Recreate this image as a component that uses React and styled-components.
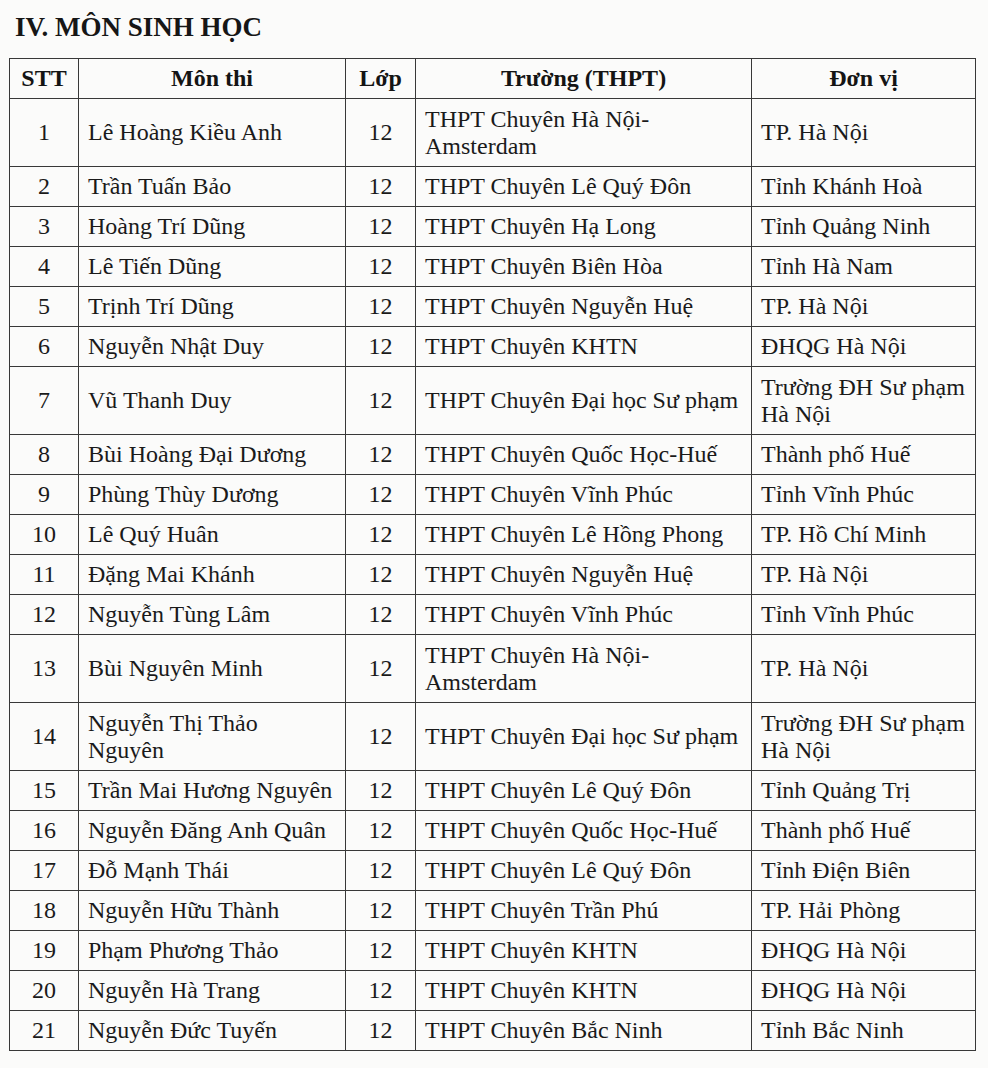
import React from 'react'
import styled, {createGlobalStyle} from "styled-components"

const GlobalStyle = createGlobalStyle`
  body {
    margin: 0;
    background: #fbfbfa;
    color: #1a1a1a;
    font-family: "Liberation Serif", "Times New Roman", serif;
  }
`

const Page = styled.div`
  padding: 12px 0 0 9px;
  width: 970px;
`

const Heading = styled.h2`
  margin: 0 0 16px 6px;
  font-size: 27px;
  line-height: 30px;
  font-weight: bold;
  color: #161616;
`

const Table = styled.table`
  border-collapse: collapse;
  table-layout: fixed;
  width: 966px;
  font-size: 24px;
  line-height: 27px;
`

const Row = styled.tr`
  height: ${props => props.tall ? "68px" : "40px"};
`

const HeadCell = styled.th`
  border: 1px solid #383838;
  font-size: 24px;
  font-weight: bold;
  text-align: center;
  padding: 0 8px;
  color: #141414;
`

const Cell = styled.td`
  border: 1px solid #383838;
  padding: 0 9px;
  vertical-align: middle;
  text-align: ${props => props.center ? "center" : "left"};
`

const students = [
    ["Lê Hoàng Kiều Anh", ["THPT Chuyên Hà Nội-", "Amsterdam"], "TP. Hà Nội"],
    ["Trần Tuấn Bảo", "THPT Chuyên Lê Quý Đôn", "Tỉnh Khánh Hoà"],
    ["Hoàng Trí Dũng", "THPT Chuyên Hạ Long", "Tỉnh Quảng Ninh"],
    ["Lê Tiến Dũng", "THPT Chuyên Biên Hòa", "Tỉnh Hà Nam"],
    ["Trịnh Trí Dũng", "THPT Chuyên Nguyễn Huệ", "TP. Hà Nội"],
    ["Nguyễn Nhật Duy", "THPT Chuyên KHTN", "ĐHQG Hà Nội"],
    ["Vũ Thanh Duy", "THPT Chuyên Đại học Sư phạm", ["Trường ĐH Sư phạm", "Hà Nội"]],
    ["Bùi Hoàng Đại Dương", "THPT Chuyên Quốc Học-Huế", "Thành phố Huế"],
    ["Phùng Thùy Dương", "THPT Chuyên Vĩnh Phúc", "Tỉnh Vĩnh Phúc"],
    ["Lê Quý Huân", "THPT Chuyên Lê Hồng Phong", "TP. Hồ Chí Minh"],
    ["Đặng Mai Khánh", "THPT Chuyên Nguyễn Huệ", "TP. Hà Nội"],
    ["Nguyễn Tùng Lâm", "THPT Chuyên Vĩnh Phúc", "Tỉnh Vĩnh Phúc"],
    ["Bùi Nguyên Minh", ["THPT Chuyên Hà Nội-", "Amsterdam"], "TP. Hà Nội"],
    [["Nguyễn Thị Thảo", "Nguyên"], "THPT Chuyên Đại học Sư phạm", ["Trường ĐH Sư phạm", "Hà Nội"]],
    ["Trần Mai Hương Nguyên", "THPT Chuyên Lê Quý Đôn", "Tỉnh Quảng Trị"],
    ["Nguyễn Đăng Anh Quân", "THPT Chuyên Quốc Học-Huế", "Thành phố Huế"],
    ["Đỗ Mạnh Thái", "THPT Chuyên Lê Quý Đôn", "Tỉnh Điện Biên"],
    ["Nguyễn Hữu Thành", "THPT Chuyên Trần Phú", "TP. Hải Phòng"],
    ["Phạm Phương Thảo", "THPT Chuyên KHTN", "ĐHQG Hà Nội"],
    ["Nguyễn Hà Trang", "THPT Chuyên KHTN", "ĐHQG Hà Nội"],
    ["Nguyễn Đức Tuyến", "THPT Chuyên Bắc Ninh", "Tỉnh Bắc Ninh"],
]

// a value is either a string or a list of lines
const lines = (val) => {
    if (!Array.isArray(val)) return val
    return val.map((l, i) => <React.Fragment key={i}>{i > 0 && <br/>}{l}</React.Fragment>)
}

const App = () => {
    return (
        <Page>
            <GlobalStyle/>
            <Heading>IV. MÔN SINH HỌC</Heading>
            <Table>
                <colgroup>
                    <col style={{width: 69}}/>
                    <col style={{width: 267}}/>
                    <col style={{width: 70}}/>
                    <col style={{width: 336}}/>
                    <col style={{width: 224}}/>
                </colgroup>
                <thead>
                <Row>
                    <HeadCell>STT</HeadCell>
                    <HeadCell>Môn thi</HeadCell>
                    <HeadCell>Lớp</HeadCell>
                    <HeadCell>Trường (THPT)</HeadCell>
                    <HeadCell>Đơn vị</HeadCell>
                </Row>
                </thead>
                <tbody>
                {students.map((el, index) => {
                    const tall = el.some(v => Array.isArray(v))
                    return (
                        <Row key={index} tall={tall ? 1 : 0}>
                            <Cell center>{index + 1}</Cell>
                            <Cell>{lines(el[0])}</Cell>
                            <Cell center>12</Cell>
                            <Cell>{lines(el[1])}</Cell>
                            <Cell>{lines(el[2])}</Cell>
                        </Row>
                    )
                })}
                </tbody>
            </Table>
        </Page>
    )
}

export default App
